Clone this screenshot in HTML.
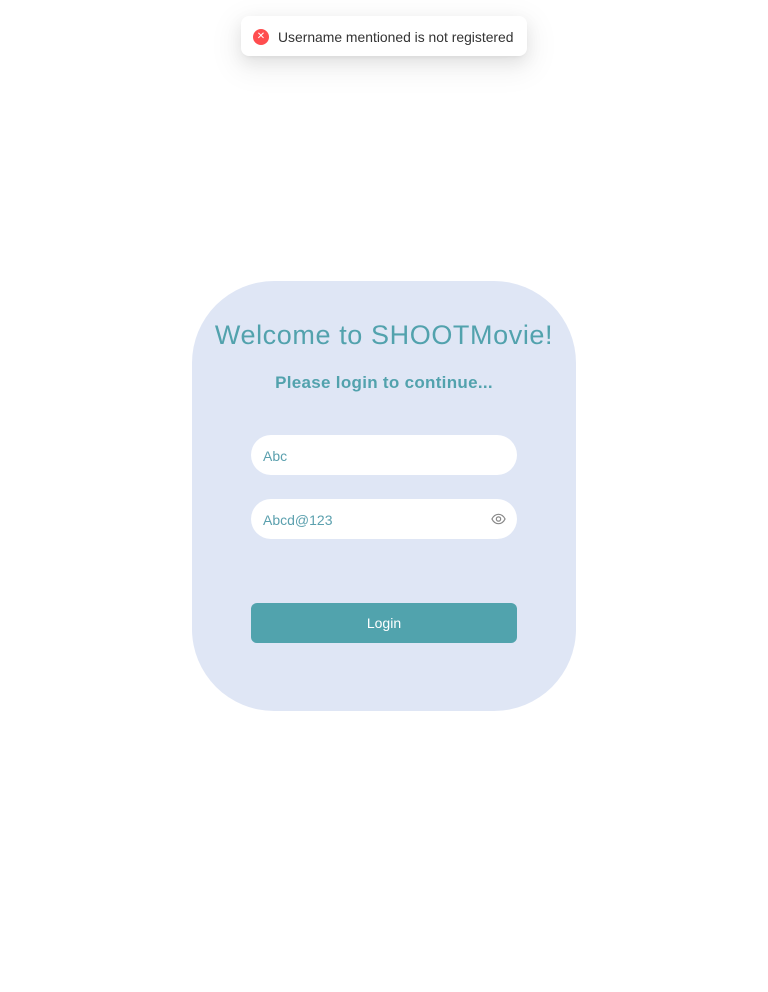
<!DOCTYPE html>
<html><head><meta charset="utf-8"><style>
body{margin:0;width:768px;height:992px;background:#fff;font-family:"Liberation Sans",sans-serif;position:relative;overflow:hidden}
.toast{position:absolute;left:241px;top:16px;width:286px;height:40px;background:#fff;border-radius:8px;box-shadow:0 6px 16px rgba(0,0,0,.08),0 3px 6px -4px rgba(0,0,0,.12),0 9px 28px 8px rgba(0,0,0,.05)}
.ic{position:absolute;left:12px;top:13px;width:16px;height:16px;border-radius:50%;background:#ff4d4f;color:#fff;font-size:10px;line-height:16px;text-align:center}
.toast span.t{position:absolute;left:37px;top:13px;font-size:13.9px;color:#333;white-space:nowrap}
.card{position:absolute;left:192px;top:281px;width:384px;height:430px;background:#dfe6f5;border-radius:82px}
h1{position:absolute;left:0;width:384px;top:39px;margin:0;text-align:center;font-size:27px;font-weight:normal;color:#52a2ad;letter-spacing:.6px}
h2{position:absolute;left:0;width:384px;top:92px;margin:0;text-align:center;font-size:17px;font-weight:bold;color:#52a2ad;letter-spacing:.3px}
.in{position:absolute;left:59px;width:266px;height:40px;background:#fff;border-radius:20px}
.in span{position:absolute;left:12px;top:13px;font-size:14px;color:#5ba0ae}
.btn{position:absolute;left:59px;top:322px;width:266px;height:40px;background:#51a3ad;border-radius:6px;color:#fff;font-size:14px;text-align:center;line-height:40px}
</style></head><body>
<div class="toast"><div class="ic">✕</div><span class="t">Username mentioned is not registered</span></div>
<div class="card">
<h1>Welcome to SHOOTMovie!</h1>
<h2>Please login to continue...</h2>
<div class="in" style="top:154px"><span>Abc</span></div>
<div class="in" style="top:218px"><span>Abcd@123</span>
<svg style="position:absolute;left:240px;top:13px" width="15" height="14" viewBox="0 0 16 14"><path d="M1 7C3 3 5.5 2 8 2s5 1 7 5c-2 4-4.5 5-7 5S3 11 1 7z" fill="none" stroke="#888" stroke-width="1.3"/><circle cx="8" cy="7" r="2.3" fill="none" stroke="#888" stroke-width="1.3"/></svg></div>
<div class="btn">Login</div>
</div>
</body></html>
